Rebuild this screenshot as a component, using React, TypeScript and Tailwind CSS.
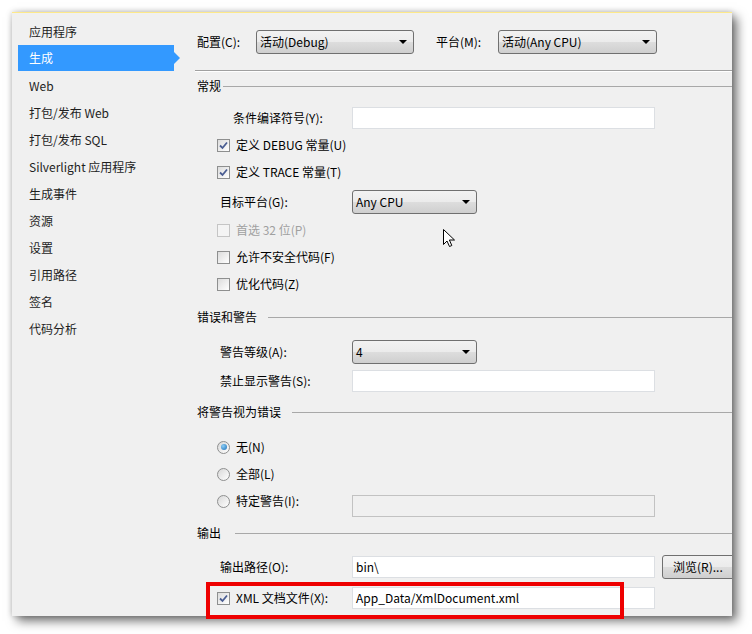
import React from "react";

const navItems = [
  "应用程序",
  "生成",
  "Web",
  "打包/发布 Web",
  "打包/发布 SQL",
  "Silverlight 应用程序",
  "生成事件",
  "资源",
  "设置",
  "引用路径",
  "签名",
  "代码分析",
];

const Combo = ({ text, width }: { text: string; width: string }) => (
  <div
    className={`${width} h-[24px] shrink-0 flex items-center justify-between pl-[3px] pr-[6px] border border-[#707070] rounded-[3px] bg-[linear-gradient(to_bottom,#f2f2f2_0%,#ebebeb_50%,#dddddd_50%,#cfcfcf_100%)]`}
  >
    <span>{text}</span>
    <span className="w-0 h-0 border-x-[4px] border-x-transparent border-t-[4px] border-t-black" />
  </div>
);

const TextBox = ({ text, disabled }: { text?: string; disabled?: boolean }) => (
  <div
    className={`w-[303px] h-[22px] shrink-0 flex items-center pl-[3px] border ${
      disabled ? "bg-[#f0f0f0] border-[#c2c2c2]" : "bg-white border-[#dcdfe3]"
    }`}
  >
    {text}
  </div>
);

const Check = ({ checked, disabled }: { checked?: boolean; disabled?: boolean }) => (
  <span
    className={`w-[13px] h-[13px] shrink-0 border flex items-center justify-center ${
      disabled
        ? "border-[#c5c5c5] bg-[#f4f4f4]"
        : "border-[#8e8f8f] bg-[linear-gradient(135deg,#dcdcdc,#ffffff)]"
    }`}
  >
    {checked && (
      <svg width="9" height="9" viewBox="0 0 9 9">
        <path d="M1 4.5 L3.5 7 L8 1.5" fill="none" stroke="#4a5d92" strokeWidth="1.8" />
      </svg>
    )}
  </span>
);

const Radio = ({ checked }: { checked?: boolean }) => (
  <span className="w-[13px] h-[13px] shrink-0 rounded-full border border-[#8e8f8f] bg-[linear-gradient(135deg,#d8d8d8,#ffffff)] flex items-center justify-center">
    {checked && (
      <span className="w-[6px] h-[6px] rounded-full bg-[radial-gradient(circle_at_35%_35%,#8ccdf5,#1b6fb8)]" />
    )}
  </span>
);

const Header = ({ text, gap }: { text: string; gap: string }) => (
  <div className="h-[16px] flex items-center pl-[2px]">
    <span>{text}</span>
    <div className={`flex-1 h-px bg-[#a8a8a8] ${gap}`} />
  </div>
);

const CheckRow = ({
  label,
  checked,
  disabled,
  mt,
}: {
  label: string;
  checked?: boolean;
  disabled?: boolean;
  mt: string;
}) => (
  <div className={`h-[22px] ${mt} flex items-center pl-[22px] gap-[6px]`}>
    <Check checked={checked} disabled={disabled} />
    <span className={disabled ? "text-[#a0a0a0]" : ""}>{label}</span>
  </div>
);

export default function App() {
  return (
    <div className="relative w-[752px] h-[634px] bg-white pt-[12px] pl-[12px] font-['Noto_Sans_CJK_SC',sans-serif] text-[12px] leading-none text-black overflow-hidden">
      <div className="w-[720px] h-[604px] bg-[#f0f0f0] border-t border-[#fde98a] shadow-[5px_5px_10px_rgba(0,0,0,0.55),0_0_6px_rgba(0,0,0,0.2)] flex overflow-hidden">
        {/* left nav */}
        <div className="w-[183px] shrink-0 pt-[5px] pl-[6px]">
          {navItems.map((item) =>
            item === "生成" ? (
              <div key={item} className="h-[27px] flex items-start">
                <div className="w-[156px] h-[26px] bg-[#3399ff] text-white flex items-center pl-[11px]">
                  {item}
                </div>
                <span className="mt-[7px] w-0 h-0 border-y-[6px] border-y-transparent border-l-[6px] border-l-[#3399ff]" />
              </div>
            ) : (
              <div key={item} className="h-[27px] flex items-center pl-[11px] text-[#1e1e1e]">
                {item}
              </div>
            )
          )}
        </div>

        {/* content */}
        <div className="flex-1 min-w-0 pt-[17px]">
          <div className="h-[24px] flex items-center pl-[2px]">
            <span className="w-[59px] shrink-0">配置(C):</span>
            <Combo text="活动(Debug)" width="w-[158px]" />
            <span className="w-[62px] shrink-0 ml-[22px]">平台(M):</span>
            <Combo text="活动(Any CPU)" width="w-[159px]" />
          </div>
          <div className="mt-[16px] h-px bg-[#a0a0a0] border-b border-white box-content" />

          <div className="mt-[6px]">
            <Header text="常规" gap="ml-[2px]" />
          </div>
          <div className="mt-[13px] h-[22px] flex items-center">
            <span className="w-[157px] shrink-0 pl-[38px]">条件编译符号(Y):</span>
            <TextBox />
          </div>
          <CheckRow label="定义 DEBUG 常量(U)" checked mt="mt-[5px]" />
          <CheckRow label="定义 TRACE 常量(T)" checked mt="mt-[5px]" />
          <div className="mt-[7px] h-[24px] flex items-center">
            <span className="w-[157px] shrink-0 pl-[25px]">目标平台(G):</span>
            <Combo text="Any CPU" width="w-[125px]" />
          </div>
          <CheckRow label="首选 32 位(P)" disabled mt="mt-[5px]" />
          <CheckRow label="允许不安全代码(F)" mt="mt-[5px]" />
          <CheckRow label="优化代码(Z)" mt="mt-[5px]" />

          <div className="mt-[14px]">
            <Header text="错误和警告" gap="ml-[11px]" />
          </div>
          <div className="mt-[15px] h-[24px] flex items-center">
            <span className="w-[157px] shrink-0 pl-[25px]">警告等级(A):</span>
            <Combo text="4" width="w-[125px]" />
          </div>
          <div className="mt-[6px] h-[22px] flex items-center">
            <span className="w-[157px] shrink-0 pl-[25px]">禁止显示警告(S):</span>
            <TextBox />
          </div>

          <div className="mt-[12px]">
            <Header text="将警告视为错误" gap="ml-[11px]" />
          </div>
          <div className="mt-[16px] h-[22px] flex items-center pl-[22px] gap-[6px]">
            <Radio checked />
            <span>无(N)</span>
          </div>
          <div className="mt-[5px] h-[22px] flex items-center pl-[22px] gap-[6px]">
            <Radio />
            <span>全部(L)</span>
          </div>
          <div className="mt-[10px] h-[22px] flex items-start">
            <div className="w-[157px] shrink-0 h-[12px] flex items-center pl-[22px] gap-[6px]">
              <Radio />
              <span>特定警告(I):</span>
            </div>
            <TextBox disabled />
          </div>

          <div className="mt-[8px]">
            <Header text="输出" gap="ml-[14px]" />
          </div>
          <div className="mt-[15px] h-[22px] flex items-center">
            <span className="w-[157px] shrink-0 pl-[25px]">输出路径(O):</span>
            <TextBox text="bin\" />
            <div className="ml-[7px] w-[82px] h-[24px] shrink-0 flex items-center pl-[10px] border border-[#707070] rounded-[3px] bg-[linear-gradient(to_bottom,#f2f2f2_0%,#ebebeb_50%,#dddddd_50%,#cfcfcf_100%)]">
              浏览(R)...
            </div>
          </div>
          <div className="mt-[9px] h-[22px] flex items-center">
            <div className="w-[157px] shrink-0 flex items-center pl-[22px] gap-[6px]">
              <Check checked />
              <span>XML 文档文件(X):</span>
            </div>
            <TextBox text="App_Data/XmlDocument.xml" />
          </div>
        </div>
      </div>

      {/* red highlight */}
      <div className="absolute left-[206px] top-[582px] w-[418px] h-[37px] border-[4px] border-[#ee0000]" />

      {/* mouse cursor */}
      <svg className="absolute left-[443px] top-[229px]" width="13" height="19" viewBox="0 0 13 19">
        <path
          d="M0.5 0.5 L0.5 15.5 L4 12 L6.5 17.5 L8.8 16.5 L6.4 11 L11.5 11 Z"
          fill="white"
          stroke="black"
          strokeWidth="1"
          strokeLinejoin="round"
        />
      </svg>
    </div>
  );
}
